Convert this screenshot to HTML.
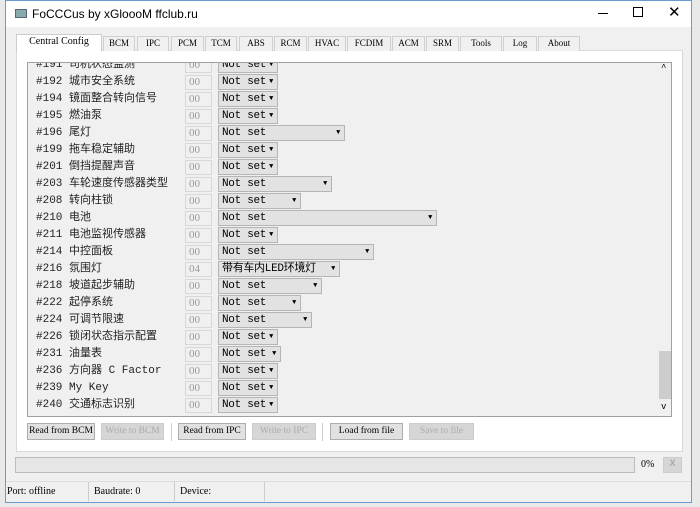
<!DOCTYPE html>
<html><head><meta charset="utf-8"><style>
*{margin:0;padding:0;box-sizing:border-box}
body{width:700px;height:507px;background:#e9e9e9;position:relative;overflow:hidden;font-family:"Liberation Mono","Noto Serif CJK SC",monospace;font-size:11px;color:#000}
.a{position:absolute;white-space:nowrap}
.win{left:5px;top:0;width:687px;height:503px;background:#f0f0f0;border:1px solid #6b9bd1}
.title{left:6px;top:1px;width:685px;height:26px;background:#fff;font-family:"Liberation Sans",sans-serif;font-size:12px}
.tab{top:36px;height:15px;border:1px solid #d0d0d0;border-bottom:none;background:#f0f0f0;font-size:9px;text-align:center;line-height:13px;font-family:"Liberation Serif",serif}
.panel{left:16px;top:50px;width:667px;height:402px;background:#fff;border:1px solid #d9d9d9}
.sa{left:27px;top:62px;width:645px;height:355px;background:#f0f0f0;border:1px solid #a0a0a0;overflow:hidden}
.row{position:absolute;left:0;height:17px;width:630px}
.lbl{position:absolute;left:8px;top:1px;line-height:17px;font-family:"Liberation Mono","Noto Sans CJK SC",monospace;font-size:11px;color:#222;white-space:nowrap}
.inp{position:absolute;left:157px;top:2px;width:27px;height:15px;border:1px solid #d8d8d8;background:#f0f0f0;color:#999;font-size:11px;line-height:13px;padding-left:3px;font-family:"Liberation Serif",serif}
.cb{position:absolute;left:190px;top:1px;height:16px;border:1px solid #b5b5b5;background:#e2e2e2;font-size:11px;line-height:14px;padding-left:3px;font-family:"Liberation Mono","Noto Sans CJK SC",monospace;white-space:nowrap;letter-spacing:-0.3px}
.cb:after{content:"▼";position:absolute;right:4px;top:0;font-size:7px}
.btn{top:423px;height:17px;border:1px solid #adadad;background:#e1e1e1;font-size:9.5px;line-height:15px;text-align:center;font-family:"Liberation Serif",serif;white-space:nowrap;overflow:hidden}
.dis{color:#aaa;background:#d6d6d6;border-color:#ccc}
.sep{top:423px;width:1px;height:18px;background:#ccc}
</style></head><body>
<div class="a win"></div>
<div class="a title"><div class="a" style="left:9px;top:8px;width:12px;height:9px;background:#8aa;border:1px solid #567"></div><div class="a" style="left:26px;top:6px">FoCCCus by xGloooM ffclub.ru</div>
<div class="a" style="left:592px;top:12px;width:10px;height:1px;background:#000"></div>
<div class="a" style="left:627px;top:6px;width:10px;height:10px;border:1px solid #000"></div>
<div class="a" style="left:662px;top:2px;font-size:15px">✕</div></div>
<div class="a panel"></div>
<div class="a tab" style="left:16px;width:86px;top:34px;height:17px;background:#fff;border-color:#ccc;font-size:10px">Central Config</div>
<div class="a tab" style="left:103px;width:32px">BCM</div>
<div class="a tab" style="left:137px;width:32px">IPC</div>
<div class="a tab" style="left:171px;width:33px">PCM</div>
<div class="a tab" style="left:205px;width:32px">TCM</div>
<div class="a tab" style="left:239px;width:34px">ABS</div>
<div class="a tab" style="left:274px;width:33px">RCM</div>
<div class="a tab" style="left:308px;width:38px">HVAC</div>
<div class="a tab" style="left:347px;width:44px">FCDIM</div>
<div class="a tab" style="left:392px;width:33px">ACM</div>
<div class="a tab" style="left:426px;width:33px">SRM</div>
<div class="a tab" style="left:460px;width:42px">Tools</div>
<div class="a tab" style="left:503px;width:34px">Log</div>
<div class="a tab" style="left:538px;width:42px">About</div>
<div class="a sa">
<div class="row" style="top:-7px"><span class="lbl">#191 司机状态监测</span><span class="inp">00</span><span class="cb" style="width:60px">Not set</span></div>
<div class="row" style="top:10px"><span class="lbl">#192 城市安全系统</span><span class="inp">00</span><span class="cb" style="width:60px">Not set</span></div>
<div class="row" style="top:27px"><span class="lbl">#194 镜面整合转向信号</span><span class="inp">00</span><span class="cb" style="width:60px">Not set</span></div>
<div class="row" style="top:44px"><span class="lbl">#195 燃油泵</span><span class="inp">00</span><span class="cb" style="width:60px">Not set</span></div>
<div class="row" style="top:61px"><span class="lbl">#196 尾灯</span><span class="inp">00</span><span class="cb" style="width:127px">Not set</span></div>
<div class="row" style="top:78px"><span class="lbl">#199 拖车稳定辅助</span><span class="inp">00</span><span class="cb" style="width:60px">Not set</span></div>
<div class="row" style="top:95px"><span class="lbl">#201 倒挡提醒声音</span><span class="inp">00</span><span class="cb" style="width:60px">Not set</span></div>
<div class="row" style="top:112px"><span class="lbl">#203 车轮速度传感器类型</span><span class="inp">00</span><span class="cb" style="width:114px">Not set</span></div>
<div class="row" style="top:129px"><span class="lbl">#208 转向柱锁</span><span class="inp">00</span><span class="cb" style="width:83px">Not set</span></div>
<div class="row" style="top:146px"><span class="lbl">#210 电池</span><span class="inp">00</span><span class="cb" style="width:219px">Not set</span></div>
<div class="row" style="top:163px"><span class="lbl">#211 电池监视传感器</span><span class="inp">00</span><span class="cb" style="width:60px">Not set</span></div>
<div class="row" style="top:180px"><span class="lbl">#214 中控面板</span><span class="inp">00</span><span class="cb" style="width:156px">Not set</span></div>
<div class="row" style="top:197px"><span class="lbl">#216 氛围灯</span><span class="inp">04</span><span class="cb" style="width:122px">带有车内LED环境灯</span></div>
<div class="row" style="top:214px"><span class="lbl">#218 坡道起步辅助</span><span class="inp">00</span><span class="cb" style="width:104px">Not set</span></div>
<div class="row" style="top:231px"><span class="lbl">#222 起停系统</span><span class="inp">00</span><span class="cb" style="width:83px">Not set</span></div>
<div class="row" style="top:248px"><span class="lbl">#224 可调节限速</span><span class="inp">00</span><span class="cb" style="width:94px">Not set</span></div>
<div class="row" style="top:265px"><span class="lbl">#226 锁闭状态指示配置</span><span class="inp">00</span><span class="cb" style="width:60px">Not set</span></div>
<div class="row" style="top:282px"><span class="lbl">#231 油量表</span><span class="inp">00</span><span class="cb" style="width:63px">Not set</span></div>
<div class="row" style="top:299px"><span class="lbl">#236 方向器 C Factor</span><span class="inp">00</span><span class="cb" style="width:60px">Not set</span></div>
<div class="row" style="top:316px"><span class="lbl">#239 My Key</span><span class="inp">00</span><span class="cb" style="width:60px">Not set</span></div>
<div class="row" style="top:333px"><span class="lbl">#240 交通标志识别</span><span class="inp">00</span><span class="cb" style="width:60px">Not set</span></div>
<div class="a" style="left:630px;top:0;width:14px;height:353px;background:#f0f0f0"></div>
<div class="a" style="left:631px;top:288px;width:12px;height:48px;background:#cdcdcd"></div>
<div class="a" style="left:633px;top:0;font-size:9px">^</div>
<div class="a" style="left:633px;top:339px;font-size:9px">v</div>
</div>
<div class="a btn" style="left:27px;width:68px">Read from BCM</div>
<div class="a btn dis" style="left:101px;width:63px">Write to BCM</div>
<div class="a sep" style="left:171px"></div>
<div class="a btn" style="left:178px;width:68px">Read from IPC</div>
<div class="a btn dis" style="left:252px;width:64px">Write to IPC</div>
<div class="a sep" style="left:322px"></div>
<div class="a btn" style="left:330px;width:73px">Load from file</div>
<div class="a btn dis" style="left:409px;width:65px">Save to file</div>
<div class="a" style="left:15px;top:457px;width:620px;height:16px;background:#e6e6e6;border:1px solid #bcbcbc"></div>
<div class="a" style="left:641px;top:459px;font-size:10px;font-family:'Liberation Serif',serif">0%</div>
<div class="a" style="left:663px;top:457px;width:19px;height:16px;background:#d6d6d6;border:1px solid #ccc;color:#999;font-size:10px;text-align:center;line-height:14px">X</div>
<div class="a" style="left:6px;top:481px;width:685px;height:21px;border-top:1px solid #ddd"></div>
<div class="a" style="left:7px;top:486px;font-size:10px;font-family:'Liberation Serif',serif">Port: offline</div>
<div class="a" style="left:88px;top:482px;width:1px;height:19px;background:#ccc"></div>
<div class="a" style="left:94px;top:486px;font-size:10px;font-family:'Liberation Serif',serif">Baudrate: 0</div>
<div class="a" style="left:174px;top:482px;width:1px;height:19px;background:#ccc"></div>
<div class="a" style="left:180px;top:486px;font-size:10px;font-family:'Liberation Serif',serif">Device:</div>
<div class="a" style="left:264px;top:482px;width:1px;height:19px;background:#ccc"></div>
</body></html>
